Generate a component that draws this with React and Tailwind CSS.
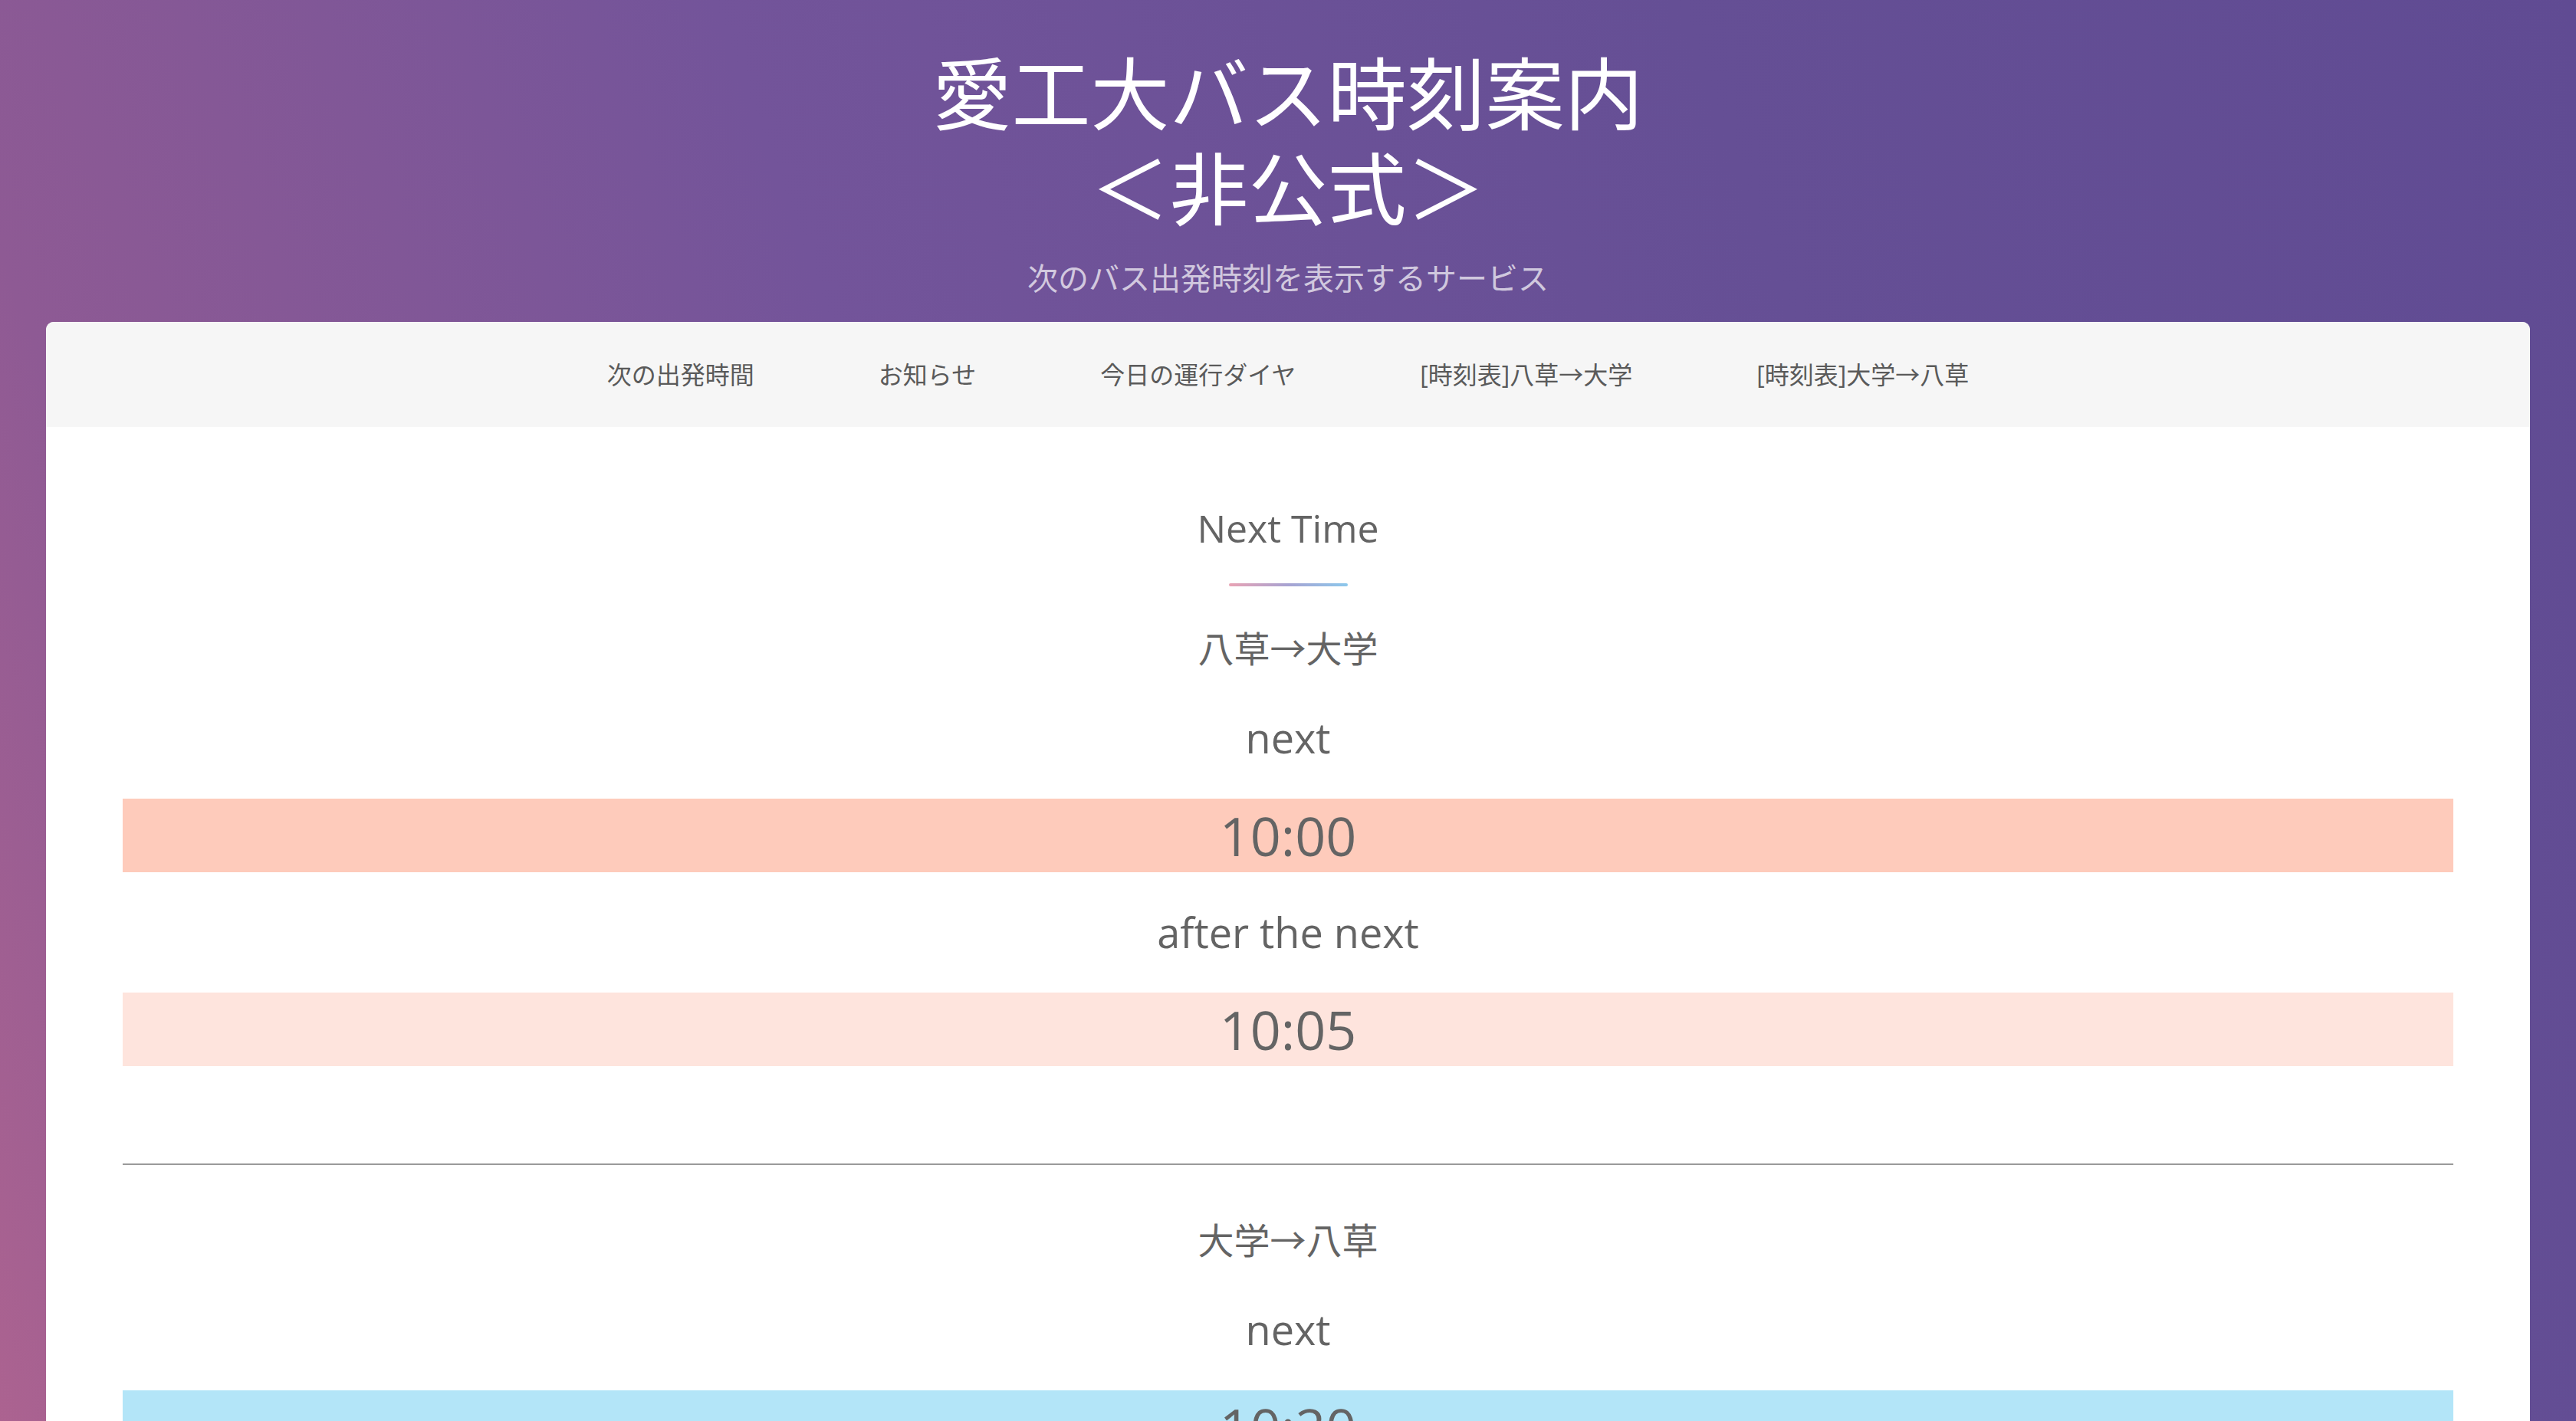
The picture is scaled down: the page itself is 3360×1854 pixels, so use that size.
import React from 'react';

const navItems = ['次の出発時間', 'お知らせ', '今日の運行ダイヤ', '[時刻表]八草→大学', '[時刻表]大学→八草'];

const routes = [
    { name: '八草→大学', next: '10:00', after: '10:05', nextBg: 'bg-[#fecbbb]', afterBg: 'bg-[#fee4dd]' },
    { name: '大学→八草', next: '10:20', after: '10:25', nextBg: 'bg-[#b3e5f8]', afterBg: 'bg-[#dcf2fb]' }
];

const TimeBand = ({ time, bg }) => (
    <div className={`h-[96px] flex items-center justify-center ${bg}`}>
        <span className="text-[70px] leading-none">{time}</span>
    </div>
);

const RouteBlock = ({ route, first }) => (
    <div className={first ? 'mt-[51px]' : 'mt-[68px]'}>
        <h3 className="text-[47px] leading-[60px] text-center">{route.name}</h3>

        <p className="mt-[54px] text-[54px] leading-[64px] text-center">next</p>
        <div className="mt-[48px]">
            <TimeBand time={route.next} bg={route.nextBg} />
        </div>

        <p className="mt-[46px] text-[54px] leading-[64px] text-center">after the next</p>
        <div className="mt-[47px]">
            <TimeBand time={route.after} bg={route.afterBg} />
        </div>
    </div>
);

export default function App() {
    return (
        <div className="min-h-screen font-['Open_Sans','Noto_Sans_CJK_JP',sans-serif] bg-[linear-gradient(70deg,#b4658f_0%,#8e5a94_17%,#73549a_42%,#654f95_72%,#604b93_100%)]">

            {/* Header */}
            <header className="pt-[60px] text-center text-white">
                <h1 className="text-[103px] leading-[124px] font-normal">
                    愛工大バス時刻案内<br />＜非公式＞
                </h1>
                <p className="mt-[27px] text-[40px] leading-[56px] text-white/70">次のバス出発時刻を表示するサービス</p>
            </header>

            {/* Card */}
            <main className="mt-[29px] mx-[60px] bg-white rounded-t-[10px] overflow-hidden">
                <nav className="h-[137px] bg-[#f6f6f6] flex items-center justify-center">
                    {navItems.map(item => (
                        <a key={item} className="px-[81px] text-[32px] text-[#5a5a5a] cursor-pointer">{item}</a>
                    ))}
                </nav>

                <section className="px-[100px] pt-[102px] pb-[120px] text-[#646464]">
                    <h2 className="text-[50px] leading-[60px] text-center">Next Time</h2>
                    <div className="mt-[42px] mx-auto w-[155px] h-[4px] rounded-full bg-[linear-gradient(90deg,#e9a3b4,#a7a3d2,#8cc8ec)]" />

                    <RouteBlock route={routes[0]} first />

                    <div className="mt-[127px] h-[2px] bg-[#9a9a9a]" />

                    <RouteBlock route={routes[1]} />
                </section>
            </main>
        </div>
    );
}
